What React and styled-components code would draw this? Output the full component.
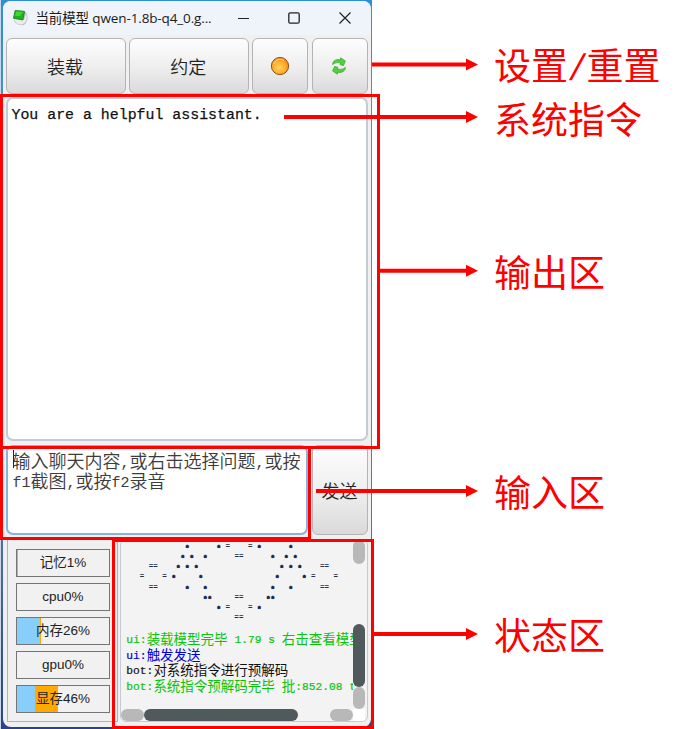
import React from "react";
import styled, { createGlobalStyle } from "styled-components";

const GlobalStyle = createGlobalStyle`
  * { box-sizing: border-box; }
  html, body { margin: 0; background: #fff; overflow: hidden; }
`;

const CJK = '"Noto Sans CJK SC", sans-serif';

const Page = styled.div`
  position: relative;
  display: flex;
  width: 697px;
  height: 729px;
  background: #fff;
  font-family: ${CJK};
`;

const Desktop = styled.div`
  width: 372px;
  height: 729px;
  padding: 1px 1px 2px 1.5px;
  border-left: 1px solid #c8d6e8;
  background: linear-gradient(#2d8fd8, #4b8fd0 20%, #6482b8 50%, #5473b0 70%, #2a4488);
`;

const Window = styled.div`
  display: flex;
  flex-direction: column;
  height: 726px;
  padding: 0 3px 4px 3px;
  border-radius: 8px;
  overflow: hidden;
  background: #f0f0f0;
`;

const TitleBar = styled.header`
  display: flex;
  align-items: center;
  flex: none;
  height: 34px;
  margin: 0 -3px;
  padding-left: 9px;
  background: #eff4fa;
`;

const Title = styled.div`
  width: 191px;
  margin-left: 7px;
  color: #1c1c1c;
  font: 13.5px/20px "Open Sans", ${CJK};
  letter-spacing: -0.13px;
  white-space: nowrap;
`;

const WindowControls = styled.div`
  display: flex;
  gap: 37px;
  margin-left: 10px;
`;

const Toolbar = styled.div`
  display: grid;
  grid-template-columns: 120px 119.5px 56px 56px;
  gap: 3.5px;
  flex: none;
  height: 56px;
  margin-top: 3px;
`;

const Button = styled.button`
  display: flex;
  align-items: center;
  justify-content: center;
  padding: 0 1px 1px 0;
  border: 1.5px solid #b4b4b4;
  border-radius: 6px;
  background: linear-gradient(#fdfdfd, #efefef 50%, #dadada);
  color: #222;
  font: 350 18px/24px ${CJK};
`;

const Output = styled.div`
  flex: none;
  width: 362px;
  height: 344px;
  margin-top: 3px;
  padding: 6px 4px;
  border: 2px solid #c3ccd6;
  border-radius: 7px;
  background: #fff;
  color: #111;
  font: 14.9px/20px "Liberation Mono", monospace;
  -webkit-text-stroke: 0.25px #111;
  white-space: pre;
`;

const InputRow = styled.div`
  display: grid;
  grid-template-columns: 302px 56px;
  gap: 4.5px;
  flex: none;
  height: 90px;
  margin-top: 4px;
`;

const Input = styled.div`
  padding: 3px 5px;
  border: 2px solid #86b4dc;
  border-radius: 7px;
  background: #fff;
  color: #3c3c3c;
  font: 350 18px/20px ${CJK};
  white-space: nowrap;
`;

const Caret = styled.span`
  display: inline-block;
  width: 1px;
  height: 18px;
  margin-right: -1px;
  background: #222;
  vertical-align: top;
`;

const Half = styled.span`
  font: 15px/0 "Liberation Mono", monospace;
  vertical-align: 1px;
`;

const StatusRow = styled.div`
  display: flex;
  flex: none;
  height: 183px;
  margin-top: 4px;
`;

const Meters = styled.div`
  display: flex;
  flex-direction: column;
  gap: 6px;
  width: 112px;
  height: 183px;
  margin-left: 1px;
  padding: 9px 7px 8px 8px;
  border: 1px solid #b2b2b2;
`;

const Meter = styled.div`
  display: flex;
  align-items: center;
  justify-content: center;
  flex: 1;
  border: 1px solid #757575;
  background: linear-gradient(90deg,
    #87cefa ${(p) => p.$blue}%, #ffaa00 ${(p) => p.$blue}% ${(p) => p.$total}%, #f1f1f1 ${(p) => p.$total}%);
  color: #222;
  font: 13.5px/20px "Liberation Sans", ${CJK};
`;

const Console = styled.div`
  display: grid;
  grid-template-columns: 232px 12px;
  grid-template-rows: 169px 12px;
  width: 248px;
  height: 183px;
  margin-left: 2px;
  border: 1px solid #c3ccd6;
  border-radius: 6px;
  overflow: hidden;
  background: #f3f3f3;
`;

const ConsoleText = styled.div`
  overflow: hidden;
  padding: 1px 0 0 5px;
`;

const Art = styled.pre`
  height: 81px;
  margin: 0 0 9px 13.5px;
  color: #23304d;
  font: bold 7.5px/10.13px "Liberation Mono", monospace;
`;

const Star = styled.span`
  color: #14284f;
  font-size: 7.5px;
  line-height: 0;
  vertical-align: -1.5px;
  -webkit-text-stroke: 0.6px #14284f;
`;

const LogLine = styled.div`
  height: 15.7px;
  color: ${(p) => p.$color};
  font: 13.5px/15.7px ${CJK};
  white-space: pre;
`;

const LogHalf = styled.span`
  font: 11.25px/0 "Liberation Mono", monospace;
  vertical-align: 1px;
  -webkit-text-stroke: 0.2px currentColor;
`;

const Track = styled.div`
  display: flex;
  flex-direction: ${(p) => (p.$vertical ? "column" : "row")};
`;

const TrackPart = styled.div`
  flex: 0 0 ${(p) => p.$size}px;
  border-radius: 6px;
  background: ${(p) => (p.$kind === "thumb" ? "#50595c" : p.$kind === "button" ? "#b8b8b8" : "transparent")};
`;

const Corner = styled.div`
  background: #fff;
`;

const Callouts = styled.aside`
  display: flex;
  flex-direction: column;
  margin-left: 122px;
  padding-top: 38px;
`;

const Callout = styled.div`
  height: 53.5px;
  margin-bottom: ${(p) => p.$after}px;
  color: #f00;
  font: 37px/53.5px ${CJK};
  white-space: nowrap;
`;

const Slash = styled.span`
  display: inline-block;
  width: 18.5px;
  font: 37px/0 "Liberation Sans", sans-serif;
  text-align: center;
  transform: skewX(-15deg);
`;

const Highlight = styled.div`
  position: absolute;
  left: ${(p) => p.$x}px;
  top: ${(p) => p.$y}px;
  width: ${(p) => p.$w}px;
  height: ${(p) => p.$h}px;
  border: 3px solid #f00;
`;

const Arrows = styled.svg`
  position: absolute;
  inset: 0;
  pointer-events: none;
`;

const art = [
  "          *      * =    = *      *",
  "         * *  *      ==      *  * *",
  "  ==    * * *                  * * *    ==",
  "=    = *     *                *     * =    =",
  "  ==      *   *              *   *      ==",
  "              **     ==     **",
  "                 * =    = *",
  "                     ==",
].join("\n");

const meters = [
  { label: "记忆1%", blue: 0, total: 1 },
  { label: "cpu0%", blue: 0, total: 0 },
  { label: "内存26%", blue: 25, total: 26.5 },
  { label: "gpu0%", blue: 0, total: 0 },
  { label: "显存46%", blue: 20, total: 45 },
];

const log = [
  { color: "#0bc30b", text: "ui:装载模型完毕 1.79 s 右击查看模型" },
  { color: "#0000d8", text: "ui:触发发送" },
  { color: "#111", text: "bot:对系统指令进行预解码" },
  { color: "#0bc30b", text: "bot:系统指令预解码完毕 批:852.08 t" },
];

const arrows = [
  [372, 64.5],
  [284, 117],
  [379, 270.7],
  [316, 491],
  [373, 634],
];

const splitWidths = (text, HalfComponent) =>
  text.split(/([\x20-\x7e]+)/).map((part, i) =>
    i % 2 ? <HalfComponent key={i}>{part}</HalfComponent> : part
  );

const AppIcon = () => (
  <svg width="17" height="19" viewBox="0 0 17 19">
    <path d="M3 2 Q12 0 15 5 Q17 12 12 16 Q5 17 2 12 Z" fill="#b9bdc0" />
    <path d="M2 10 L12 11 L14 4 Q17 13 10 15.5 Q4 16 2 10Z" fill="#ececec" />
    <path d="M3.2 1.4 L12.6 2.4 L10.8 11 L1.4 9.2 Z" fill="#19b51b" stroke="#168020" strokeWidth="0.8" />
    <path d="M4 2.5 L11 3 L8 7 L3 7 Z" fill="#40d630" />
  </svg>
);

const MinimizeIcon = () => (
  <svg width="13" height="14" viewBox="0 0 13 14"><path d="M1 7.5H12" stroke="#222" strokeWidth="1.2" /></svg>
);

const MaximizeIcon = () => (
  <svg width="14" height="14" viewBox="0 0 14 14" fill="none">
    <rect x="1.8" y="1.8" width="10.4" height="10.4" rx="1.5" stroke="#222" strokeWidth="1.3" />
  </svg>
);

const CloseIcon = () => (
  <svg width="14" height="14" viewBox="0 0 14 14"><path d="M1.5 1.5L12.5 12.5M12.5 1.5L1.5 12.5" stroke="#222" strokeWidth="1.2" /></svg>
);

const OrangeDot = () => (
  <svg width="20" height="20" viewBox="0 0 20 20">
    <defs>
      <radialGradient id="amber" cx="45%" cy="60%" r="60%">
        <stop offset="0" stopColor="#ffd35c" />
        <stop offset="0.6" stopColor="#ffae2b" />
        <stop offset="1" stopColor="#ee8711" />
      </radialGradient>
    </defs>
    <circle cx="10" cy="10" r="8.6" fill="url(#amber)" stroke="#8e501a" strokeWidth="1" />
    <path d="M4 8 A6.3 6.3 0 0 1 14 4.6" fill="none" stroke="#ffd89a" strokeWidth="1" />
  </svg>
);

const RefreshIcon = () => (
  <svg width="16" height="18" viewBox="0 0 16 18" fill="#4fd33d" stroke="#35a22c" strokeWidth="0.7" strokeLinejoin="round">
    <path d="M1.6 7.6 C1.8 3.6 5.2 2 9.6 2.8 L9.6 .8 L14.4 4 L12.4 8.6 L9 7.6 L9.6 5.9 C6.4 5.2 4.2 5.6 1.6 7.6Z" />
    <path d="M14.4 10.4 C14.2 14.4 10.8 16 6.4 15.2 L6.4 17.2 L1.6 14 L3.6 9.4 L7 10.4 L6.4 12.1 C9.6 12.8 11.8 12.4 14.4 10.4Z" />
  </svg>
);

export default function App() {
  return (
    <Page>
      <GlobalStyle />
      <Desktop>
        <Window>
          <TitleBar>
            <AppIcon />
            <Title>当前模型 qwen-1.8b-q4_0.g...</Title>
            <WindowControls>
              <MinimizeIcon />
              <MaximizeIcon />
              <CloseIcon />
            </WindowControls>
          </TitleBar>
          <Toolbar>
            <Button>装载</Button>
            <Button>约定</Button>
            <Button aria-label="设置"><OrangeDot /></Button>
            <Button aria-label="重置"><RefreshIcon /></Button>
          </Toolbar>
          <Output>You are a helpful assistant.</Output>
          <InputRow>
            <Input>
              <Caret />
              {splitWidths("输入聊天内容,或右击选择问题,或按", Half)}
              <br />
              {splitWidths("f1截图,或按f2录音", Half)}
            </Input>
            <Button>发送</Button>
          </InputRow>
          <StatusRow>
            <Meters>
              {meters.map((m) => (
                <Meter key={m.label} $blue={m.blue} $total={m.total}>{m.label}</Meter>
              ))}
            </Meters>
            <Console>
              <ConsoleText>
                <Art>
                  {art.split(/(\*+)/).map((part, i) => (i % 2 ? <Star key={i}>{part}</Star> : part))}
                </Art>
                {log.map((l) => (
                  <LogLine key={l.text} $color={l.color}>{splitWidths(l.text, LogHalf)}</LogLine>
                ))}
              </ConsoleText>
              <Track $vertical>
                <TrackPart $size={24} $kind="button" />
                <TrackPart $size={60} />
                <TrackPart $size={63} $kind="thumb" />
                <TrackPart $size={22} $kind="button" />
              </Track>
              <Track>
                <TrackPart $size={23} $kind="button" />
                <TrackPart $size={154} $kind="thumb" />
                <TrackPart $size={32} />
                <TrackPart $size={23} $kind="button" />
              </Track>
              <Corner />
            </Console>
          </StatusRow>
        </Window>
      </Desktop>
      <Callouts>
        <Callout $after={0}>设置<Slash>/</Slash>重置</Callout>
        <Callout $after={100}>系统指令</Callout>
        <Callout $after={166.5}>输出区</Callout>
        <Callout $after={89.5}>输入区</Callout>
        <Callout $after={0}>状态区</Callout>
      </Callouts>
      <Highlight $x={0} $y={94} $w={380} $h={355} />
      <Highlight $x={0} $y={446} $w={311} $h={94} />
      <Highlight $x={112} $y={539} $w={262} $h={190} />
      <Arrows width="697" height="729" viewBox="0 0 697 729">
        {arrows.map(([x, y]) => (
          <g key={y}>
            <path d={`M${x} ${y}H467`} stroke="#f00" strokeWidth="4" />
            <path d={`M466 ${y - 6}L478 ${y}L466 ${y + 6}Z`} fill="#f00" />
          </g>
        ))}
      </Arrows>
    </Page>
  );
}
